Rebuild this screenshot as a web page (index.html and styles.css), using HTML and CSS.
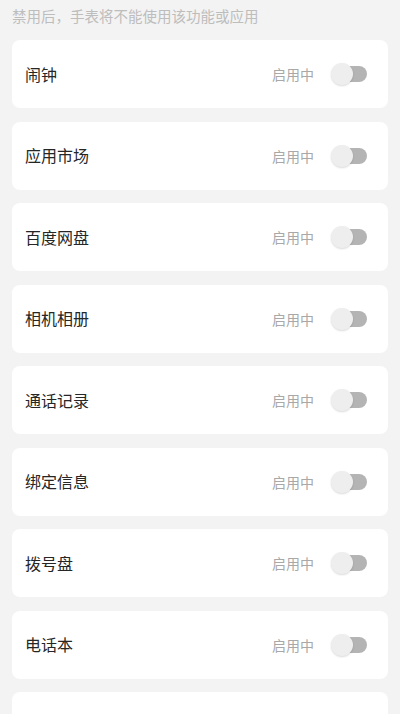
FILE: index.html
```html
<!DOCTYPE html>
<html lang="zh-CN">
<head>
<meta charset="utf-8">
<link rel="stylesheet" href="styles.css">
</head>
<body>
<div class="page">
  <div class="hint">禁用后，手表将不能使用该功能或应用</div>
  <div class="card"><span class="label">闹钟</span><span class="status">启用中</span><span class="toggle"><span class="track"></span><span class="thumb"></span></span></div>
  <div class="card"><span class="label">应用市场</span><span class="status">启用中</span><span class="toggle"><span class="track"></span><span class="thumb"></span></span></div>
  <div class="card"><span class="label">百度网盘</span><span class="status">启用中</span><span class="toggle"><span class="track"></span><span class="thumb"></span></span></div>
  <div class="card"><span class="label">相机相册</span><span class="status">启用中</span><span class="toggle"><span class="track"></span><span class="thumb"></span></span></div>
  <div class="card"><span class="label">通话记录</span><span class="status">启用中</span><span class="toggle"><span class="track"></span><span class="thumb"></span></span></div>
  <div class="card"><span class="label">绑定信息</span><span class="status">启用中</span><span class="toggle"><span class="track"></span><span class="thumb"></span></span></div>
  <div class="card"><span class="label">拨号盘</span><span class="status">启用中</span><span class="toggle"><span class="track"></span><span class="thumb"></span></span></div>
  <div class="card"><span class="label">电话本</span><span class="status">启用中</span><span class="toggle"><span class="track"></span><span class="thumb"></span></span></div>
  <div class="card"><span class="label"></span></div>
</div>
</body>
</html>
```
FILE: styles.css
```css
html, body {
  margin: 0;
  padding: 0;
  background: #f3f3f3;
}
body {
  font-family: "Noto Sans CJK SC", "Noto Sans", sans-serif;
  height: 714px;
  overflow: hidden;
}
.page {
  display: flex;
  flex-direction: column;
}
.hint {
  padding: 6px 12px 14px;
  font-size: 14.5px;
  line-height: 20px;
  color: #bdbdbd;
}
.card {
  flex: none;
  height: 68px;
  margin: 0 12px 13.5px;
  background: #ffffff;
  border-radius: 8px;
  display: flex;
  align-items: center;
  padding: 0 21px 0 13px;
  box-sizing: border-box;
}
.label {
  flex: 1;
  font-size: 16px;
  color: #262626;
  margin-top: -1px;
}
.status {
  font-size: 14px;
  color: #a8a8a8;
  margin-right: 17px;
}
.toggle {
  position: relative;
  width: 36px;
  height: 22px;
}
.track {
  position: absolute;
  right: 0;
  top: 3px;
  width: 32px;
  height: 16px;
  border-radius: 8px;
  background: #b4b4b4;
}
.thumb {
  position: absolute;
  left: 0;
  top: 0;
  width: 22px;
  height: 22px;
  border-radius: 50%;
  background: #eeeeee;
  box-shadow: 0 1px 2px rgba(0, 0, 0, 0.15);
}
```
